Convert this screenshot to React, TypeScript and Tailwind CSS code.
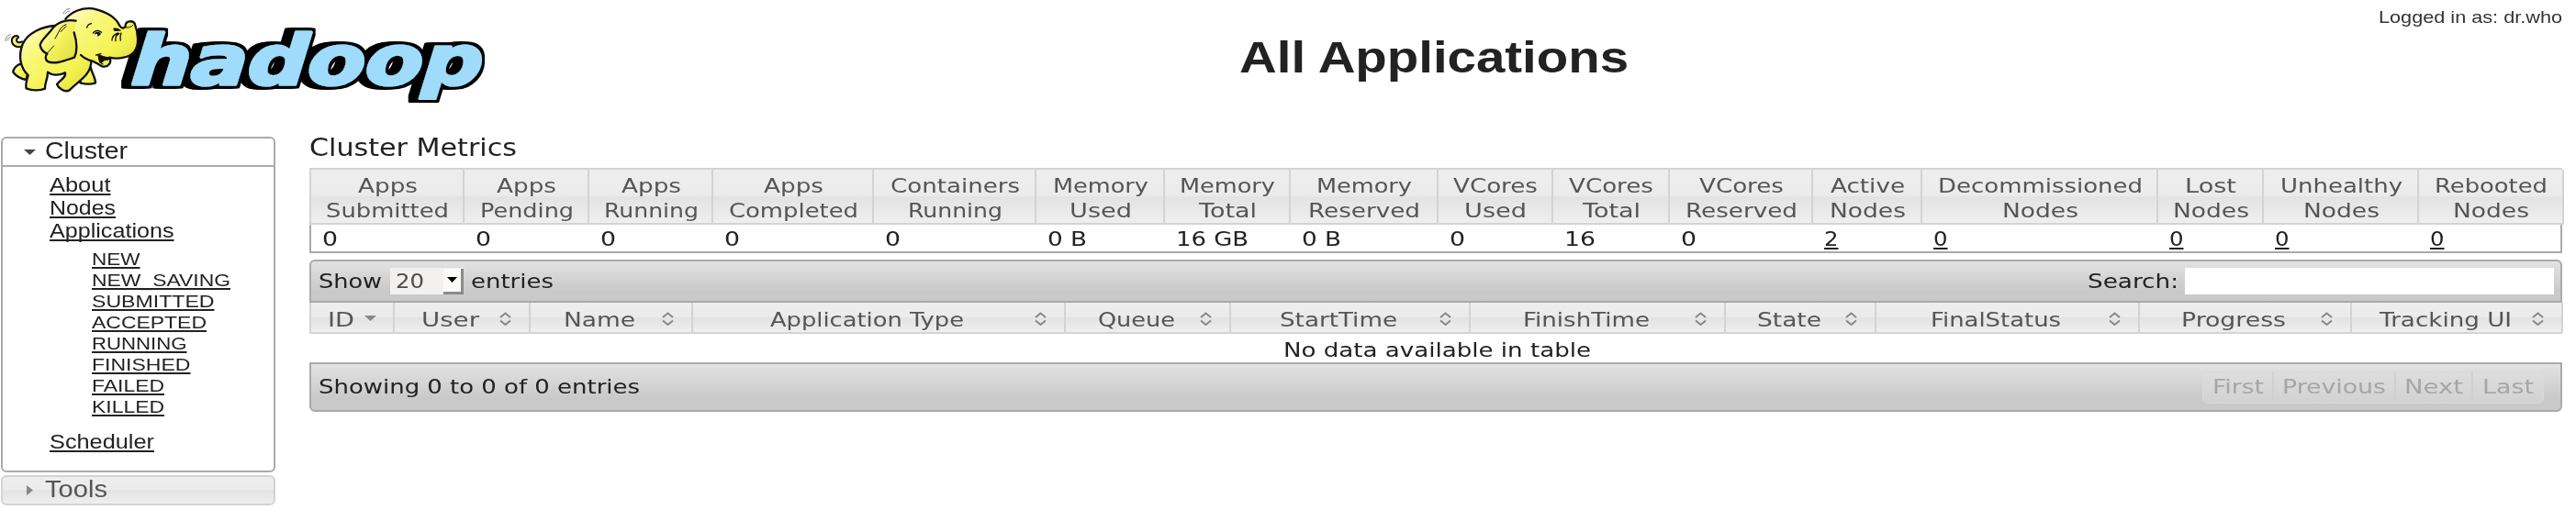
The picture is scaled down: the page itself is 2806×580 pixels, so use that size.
import { useLayoutEffect, useRef } from "react";

/** Text set to an exact advance width by stretching it horizontally. */
function Fit({ w, children, className = "" }: { w: number; children: string; className?: string }) {
  const ref = useRef<HTMLSpanElement>(null);
  useLayoutEffect(() => {
    const el = ref.current;
    if (!el) return;
    el.style.transform = "none";
    el.style.transform = `scaleX(${w / el.getBoundingClientRect().width})`;
  }, [w, children]);
  return (
    <span className="block shrink-0 text-left" style={{ width: w }}>
      <span ref={ref} className={`inline-block origin-left whitespace-pre align-top ${className}`}>
        {children}
      </span>
    </span>
  );
}

const LINK = "underline decoration-[1.5px] underline-offset-[2px] [text-decoration-skip-ink:none]";

type Metric = { head: [string, number][]; value: string; vw: number; link?: boolean };

const metrics: Metric[] = [
  { head: [["Apps", 65], ["Submitted", 134]], value: "0", vw: 17 },
  { head: [["Apps", 65], ["Pending", 102]], value: "0", vw: 17 },
  { head: [["Apps", 65], ["Running", 103]], value: "0", vw: 17 },
  { head: [["Apps", 65], ["Completed", 141]], value: "0", vw: 17 },
  { head: [["Containers", 141], ["Running", 103]], value: "0", vw: 17 },
  { head: [["Memory", 104], ["Used", 68]], value: "0 B", vw: 43 },
  { head: [["Memory", 104], ["Total", 63]], value: "16 GB", vw: 79 },
  { head: [["Memory", 104], ["Reserved", 122]], value: "0 B", vw: 43 },
  { head: [["VCores", 92], ["Used", 68]], value: "0", vw: 17 },
  { head: [["VCores", 92], ["Total", 63]], value: "16", vw: 34 },
  { head: [["VCores", 92], ["Reserved", 122]], value: "0", vw: 17 },
  { head: [["Active", 81], ["Nodes", 83]], value: "2", vw: 15.5, link: true },
  { head: [["Decommissioned", 223], ["Nodes", 83]], value: "0", vw: 15.5, link: true },
  { head: [["Lost", 56], ["Nodes", 83]], value: "0", vw: 15.5, link: true },
  { head: [["Unhealthy", 133], ["Nodes", 83]], value: "0", vw: 15.5, link: true },
  { head: [["Rebooted", 123], ["Nodes", 83]], value: "0", vw: 15.5, link: true },
];

const METRIC_COLS =
  "grid grid-cols-[167px_136px_135px_175px_177px_140px_137px_161px_125px_127px_156px_119px_257px_115px_169px_158px]";
const APP_COLS = "grid grid-cols-[91px_148px_177px_406px_180px_261px_278px_164px_287px_231px_230px]";

const columns: [string, number][] = [
  ["ID", 29],
  ["User", 63],
  ["Name", 78],
  ["Application Type", 211],
  ["Queue", 84],
  ["StartTime", 128],
  ["FinishTime", 138],
  ["State", 70],
  ["FinalStatus", 142],
  ["Progress", 114],
  ["Tracking UI", 144],
];

const states: [string, number][] = [
  ["NEW", 52.5],
  ["NEW_SAVING", 151],
  ["SUBMITTED", 133.5],
  ["ACCEPTED", 125],
  ["RUNNING", 103.5],
  ["FINISHED", 107.5],
  ["FAILED", 79],
  ["KILLED", 79],
];

function Logo() {
  return (
    <svg className="block h-[120px] w-[540px] overflow-visible" viewBox="0 0 540 120">
      <defs>
        <filter id="slab" x="-10%" y="-20%" width="120%" height="140%">
          <feMorphology in="SourceAlpha" operator="dilate" radius="2.500" result="edge" />
          <feOffset in="edge" dx="-3" result="e1" />
          <feOffset in="edge" dx="-6" result="e2" />
          <feOffset in="edge" dx="-8" result="e3" />
          <feMerge>
            <feMergeNode in="e3" />
            <feMergeNode in="e2" />
            <feMergeNode in="e1" />
            <feMergeNode in="edge" />
            <feMergeNode in="SourceGraphic" />
          </feMerge>
        </filter>
        <linearGradient id="skin" x1="0" y1="0" x2="1" y2="1">
          <stop offset="0" stopColor="#fffde0" />
          <stop offset=".3" stopColor="#f9f87a" />
          <stop offset=".7" stopColor="#f4f251" />
          <stop offset="1" stopColor="#d9d53a" />
        </linearGradient>
        <linearGradient id="ear" x1="0" y1="0" x2="1" y2="1">
          <stop offset="0" stopColor="#fefcc8" />
          <stop offset=".5" stopColor="#f5f35c" />
          <stop offset="1" stopColor="#dcd93c" />
        </linearGradient>
      </defs>
      <g filter="url(#slab)">
        <text
          transform="translate(142 92) skewX(-4)"
          textLength="383"
          lengthAdjust="spacingAndGlyphs"
          fontFamily="'DejaVu Sans', sans-serif"
          fontWeight="bold"
          fontStyle="italic"
          fontSize="75"
          strokeLinejoin="round"
          fill="#9fdcfb"
          stroke="#9fdcfb"
          strokeWidth="3"
        >
          hadoop
        </text>
      </g>
      <g transform="scale(.33333)" stroke="#111" strokeWidth="7" strokeLinejoin="round" strokeLinecap="round" fill="url(#skin)">
        <path d="M70 152C52 158 36 146 39 128C44 114 62 114 60 123C50 126 52 146 72 136" strokeWidth="6" />
        <path d="M70 208C54 212 42 226 43 236C54 250 72 258 86 261L92 234Z" />
        <path d="M296 220C300 240 312 252 312 271C296 277 278 275 262 271L266 244Z" />
        <path d="M182 84C138 86 90 108 74 144C58 186 68 224 92 246C88 262 82 276 86 289C104 297 132 297 147 290C145 272 156 262 156 236C170 247 192 247 213 238C217 254 196 262 186 276C192 290 210 302 226 296C256 264 300 246 298 196L300 110Z" />
        <path d="M214 62C234 38 268 24 304 28C346 38 378 54 391 84C398 96 412 92 410 82C412 68 434 66 440 77C452 108 456 150 438 170C420 190 384 194 358 188C368 204 354 222 334 217C318 210 312 200 290 194C276 190 268 180 262 172L240 100Z" stroke="none" />
        <path d="M214 62C234 38 268 24 304 28C346 38 378 54 391 84C398 96 412 92 410 82C412 68 434 66 440 77C452 108 456 150 438 170C420 190 384 194 358 188C366 204 354 222 334 217C318 210 312 200 290 196C278 192 270 186 264 180" fill="none" />
        <path d="M248 68C214 62 184 74 168 98C152 118 132 134 131 148C134 162 144 172 154 176C146 184 148 198 158 202C180 212 218 196 243 188C254 166 250 132 242 106" fill="url(#ear)" stroke="none" />
        <path d="M248 68C214 62 184 74 168 98C152 118 132 134 131 148C134 162 144 172 154 176C146 184 148 198 158 202C180 212 218 196 243 188C254 166 250 132 242 106" fill="none" />
        <path d="M154 174C164 164 170 156 176 150M216 80C204 84 198 92 192 104L180 126M216 86L198 104" fill="none" strokeWidth="3" />
        <path d="M322 180C332 181 344 189 358 188C359 194 354 197 346 196C338 197 334 205 328 206Z" fill="#111" strokeWidth="3" />
        <path d="M314 180L330 176M322 180C322 194 328 206 336 210" fill="none" strokeWidth="4" />
        <path d="M284 90C286 82 292 78 299 77M304 108C312 98 322 98 332 106M372 94C382 92 388 96 393 100M366 132C366 120 374 112 386 108M378 134C376 122 380 114 390 110M394 132C392 124 392 118 396 108" fill="none" strokeWidth="4" />
        <path d="M308 112C312 101 322 101 330 110C324 120 315 122 308 112Z" fill="#111" stroke="none" />
        <path d="M370 95C378 90 386 94 392 101L374 102Z" fill="#111" stroke="none" />
        <circle cx="314" cy="115" r="4.500" fill="#fff" stroke="none" />
        <path d="M412 90C420 92 430 88 434 82" fill="none" strokeWidth="3" />
        <path d="M208 44C210 34 218 28 228 29M214 45C218 38 222 36 226 36M18 134C18 122 24 116 34 113M26 132C26 126 28 122 34 120" fill="none" strokeWidth="3" stroke="#777" />
      </g>
    </svg>
  );
}

function SortIcon() {
  return (
    <svg className="mt-[3px] block h-[15px] w-[13px] shrink-0" viewBox="0 0 13 15" fill="none" stroke="#888" strokeWidth="2">
      <path d="M1 6L6.500 1.500L12 6M1 9.500L6.500 14L12 9.500" />
    </svg>
  );
}

const GLASS =
  "bg-[linear-gradient(#eeeeee_0%,#ebebeb_48%,#e3e3e3_52%,#efefef_100%)]";
const BAR = "bg-[linear-gradient(#e2e2e2_0%,#c9c9c9_75%,#cacaca_100%)]";

function Sidebar() {
  return (
    <nav className="w-[299px] font-['Liberation_Sans',Arial,sans-serif] text-[#222]">
      <div className="h-[366px] rounded-[6px] border-2 border-[#aaa] bg-white">
        <div className="flex h-[31px] items-start border-b-2 border-[#aaa] pl-[23px] text-[25px] leading-[27px]">
          <svg className="mt-[12px] mr-[10px] block h-[6px] w-[13px]" viewBox="0 0 13 6" fill="#454545">
            <path d="M0 0H13L6.500 6Z" />
          </svg>
          <Fit w={90}>Cluster</Fit>
        </div>
        <div className="pl-[51px] pt-[8px] text-[21.500px] leading-[25.200px]">
          <Fit w={66.5} className={LINK}>About</Fit>
          <Fit w={72} className={LINK}>Nodes</Fit>
          <Fit w={135.5} className={LINK}>Applications</Fit>
          <div className="mt-[5px] pl-[46px] text-[19px] leading-[23.100px]">
            {states.map(([s, w]) => (
              <Fit key={s} w={w} className={LINK}>{s}</Fit>
            ))}
          </div>
          <div className="mt-[15px]">
            <Fit w={114} className={LINK}>Scheduler</Fit>
          </div>
        </div>
      </div>
      <div className={`mt-[3px] flex h-[33px] items-start rounded-[6px] border-2 border-[#d3d3d3] pl-[26px] text-[25px] leading-[27px] text-[#555] ${GLASS}`}>
        <svg className="mt-[9px] mr-[13px] block h-[11px] w-[7px]" viewBox="0 0 7 11" fill="#888">
          <path d="M0 0V11L7 5.500Z" />
        </svg>
        <Fit w={68}>Tools</Fit>
      </div>
    </nav>
  );
}

function Metrics() {
  return (
    <div className="w-[2454px]">
      <div className={`${METRIC_COLS} border-y-2 border-l-2 border-[#d3d3d3] ${GLASS} h-[62px]`}>
        {metrics.map((m, i) => (
          <div key={i} className="flex flex-col items-center border-r-2 border-[#d3d3d3] pt-[5px] pl-[1px] leading-[27.300px] text-[#555]">
            {m.head.map(([t, w]) => (
              <Fit key={t} w={w}>{t}</Fit>
            ))}
          </div>
        ))}
      </div>
      <div className={`${METRIC_COLS} h-[31px] border-x-2 border-b-2 border-[#aaa]`}>
        {metrics.map((m, i) => (
          <div key={i} className="pl-[12px] pt-[3px] leading-[27px]">
            <Fit w={m.vw} className={m.link ? LINK : ""}>{m.value}</Fit>
          </div>
        ))}
      </div>
    </div>
  );
}

function Pager() {
  const cell = "flex items-center justify-center border-r-2 border-[#d0d0d0]";
  return (
    <div className="mr-[18px] flex h-[35px] overflow-hidden rounded-[6px] border border-[#d9d9d9] bg-[linear-gradient(#dddddd,#d2d2d2)] text-[#a6a6a6]">
      <div className={`${cell} w-[77px]`}><Fit w={56}>First</Fit></div>
      <div className={`${cell} w-[133px]`}><Fit w={113}>Previous</Fit></div>
      <div className={`${cell} w-[84px]`}><Fit w={64}>Next</Fit></div>
      <div className="flex w-[76px] items-center justify-center"><Fit w={56}>Last</Fit></div>
    </div>
  );
}

function Applications() {
  return (
    <div className="mt-[7px] w-[2454px]">
      <div className={`flex h-[47px] items-center rounded-t-[6px] border-2 border-[#aaa] pl-[8px] ${BAR}`}>
        <Fit w={69}>Show</Fit>
        <div className="ml-[9px] flex h-[29px] w-[80px] items-center bg-[#f2f1f0] pl-[6px] text-[#4c4c4c]">
          <Fit w={31}>20</Fit>
          <div className="ml-auto flex h-[28px] w-[22px] items-center justify-center border-r-[3px] border-b-[3px] border-[#8c8b8a] bg-[#fafaf9]">
            <svg className="block h-[6px] w-[11px]" viewBox="0 0 11 6"><path d="M0 0H11L5.500 6Z" /></svg>
          </div>
        </div>
        <div className="ml-[8px]"><Fit w={90}>entries</Fit></div>
        <div className="ml-auto flex items-center pr-[7px]">
          <Fit w={99}>Search:</Fit>
          <input aria-label="Search" className="ml-[7px] h-[29px] w-[402px] bg-white" />
        </div>
      </div>
      <div className={`${APP_COLS} h-[34px] border-b-2 border-l-2 border-[#d3d3d3] ${GLASS} text-[#555]`}>
        {columns.map(([t, w], i) => (
          <div key={t} className={`flex items-center border-r-2 border-[#d3d3d3] pl-[7px] ${i === 0 ? "pr-[18px]" : "pr-[19px]"}`}>
            <div className="flex flex-1 justify-center pt-[5px]"><Fit w={w}>{t}</Fit></div>
            {i === 0 ? (
              <svg className="mt-[2px] block h-[6px] w-[13px] shrink-0" viewBox="0 0 13 6" fill="#888"><path d="M0 0H13L6.500 6Z" /></svg>
            ) : (
              <SortIcon />
            )}
          </div>
        ))}
      </div>
      <div className="flex h-[31px] items-center justify-center pt-[5px] pl-[3px]">
        <Fit w={335}>No data available in table</Fit>
      </div>
      <div className={`flex h-[54px] items-center rounded-b-[6px] border-2 border-[#aaa] pl-[8px] ${BAR}`}>
        <Fit w={350}>Showing 0 to 0 of 0 entries</Fit>
        <div className="ml-auto"><Pager /></div>
      </div>
    </div>
  );
}

export default function App() {
  return (
    <div className="h-[580px] w-[2806px] overflow-hidden bg-white text-[#222]">
      <header className="flex h-[120px] items-start font-['Liberation_Sans',Arial,sans-serif]">
        <Logo />
        <h1 className="ml-[810px] pt-[35px] text-[48px] font-bold leading-[55px]">
          <Fit w={424}>All Applications</Fit>
        </h1>
        <div className="ml-auto pr-[15px] pt-[8px] text-[19px] leading-[22px] text-[#333]">
          <Fit w={200}>Logged in as: dr.who</Fit>
        </div>
      </header>
      <div className="flex pl-[1px]">
        <div className="pt-[29px]"><Sidebar /></div>
        <main className="ml-[37px] font-['DejaVu_Sans',sans-serif] text-[20.500px] leading-[24px]">
          <div className="pt-[25px] pb-[6px] text-[26px] leading-[32px]">
            <Fit w={226}>Cluster Metrics</Fit>
          </div>
          <Metrics />
          <Applications />
        </main>
      </div>
    </div>
  );
}
